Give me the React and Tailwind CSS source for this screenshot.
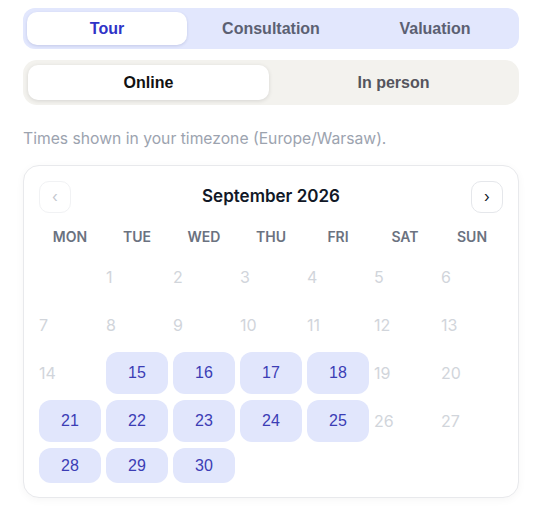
import React, { useState } from 'react';

const types = ['Tour', 'Consultation', 'Valuation'];
const modes = ['Online', 'In person'];
const weekdays = ['MON', 'TUE', 'WED', 'THU', 'FRI', 'SAT', 'SUN'];

// September 2026 starts on a Tuesday
const available = [15, 16, 17, 18, 21, 22, 23, 24, 25, 28, 29, 30];

const App = () => {
    const [type, setType] = useState('Tour');
    const [mode, setMode] = useState('Online');

    const cells = [null];
    for (let d = 1; d <= 30; d++) cells.push(d);

    return (
        <div className="min-h-screen bg-white pt-2" style={{ fontFamily: 'Inter, "Noto Sans", sans-serif' }}>
            <div className="ml-[23px] w-[496px]">
                <div className="grid grid-cols-3 gap-1 rounded-xl bg-[#e2e7fd] p-1">
                    {types.map((t) => (
                        <button
                            key={t}
                            onClick={() => setType(t)}
                            className={`h-[33px] rounded-[10px] text-base font-bold ${
                                type === t ? 'bg-white text-[#2f33c7] shadow-[0_1px_3px_rgba(60,70,140,0.18)]' : 'text-[#5b6072]'
                            }`}
                            style={{ fontFamily: '"Liberation Sans", Arial, sans-serif' }}
                        >
                            {t}
                        </button>
                    ))}
                </div>

                <div className="mt-[11px] grid grid-cols-2 gap-1 rounded-[14px] bg-[#f3f2ee] p-[5px]">
                    {modes.map((m) => (
                        <button
                            key={m}
                            onClick={() => setMode(m)}
                            className={`h-[35px] rounded-[10px] text-base font-bold ${
                                mode === m ? 'bg-white text-[#111111] shadow-[0_1px_4px_rgba(0,0,0,0.12)]' : 'text-[#55555d]'
                            }`}
                            style={{ fontFamily: '"Liberation Sans", Arial, sans-serif' }}
                        >
                            {m}
                        </button>
                    ))}
                </div>

                <p className="mt-[22px] text-[15.7px] leading-6 text-[#9ca3af]">Times shown in your timezone (Europe/Warsaw).</p>

                <div className="mt-[14px] rounded-2xl border border-[#e8e9ec] bg-white px-[15px] pt-[15px] pb-[14px] shadow-[0_2px_8px_rgba(0,0,0,0.04)]">
                    <div className="flex items-center justify-between">
                        <button className="flex h-8 w-8 items-center justify-center rounded-[10px] border border-[#f1f2f4] text-[15px] text-[#c4c8cf]">
                            ‹
                        </button>
                        <div className="text-[17px] font-semibold text-[#111827]">September 2026</div>
                        <button className="flex h-8 w-8 items-center justify-center rounded-[10px] border border-[#e5e7eb] text-[15px] text-[#111827]">
                            ›
                        </button>
                    </div>

                    <div className="mt-[14px] grid grid-cols-7 gap-x-[5px]">
                        {weekdays.map((w) => (
                            <div key={w} className="text-center text-sm font-semibold leading-5 text-[#6b7280]">
                                {w}
                            </div>
                        ))}
                    </div>

                    <div className="mt-[9px] grid grid-cols-7 grid-rows-[42px_42px_42px_42px_35px] gap-x-[5px] gap-y-[6px]">
                        {cells.map((d, i) => {
                            if (d === null) return <div key={'e' + i} />;
                            if (available.includes(d)) {
                                return (
                                    <button
                                        key={d}
                                        className="flex items-center justify-center rounded-xl bg-[#e1e6fc] text-base text-[#3b3db5]"
                                        style={{ fontFamily: '"Liberation Sans", Arial, sans-serif' }}
                                    >
                                        {d}
                                    </button>
                                );
                            }
                            return (
                                <div key={d} className="flex items-center text-base text-[#d1d5db]">
                                    {d}
                                </div>
                            );
                        })}
                    </div>
                </div>
            </div>
        </div>
    );
};

export default App;
